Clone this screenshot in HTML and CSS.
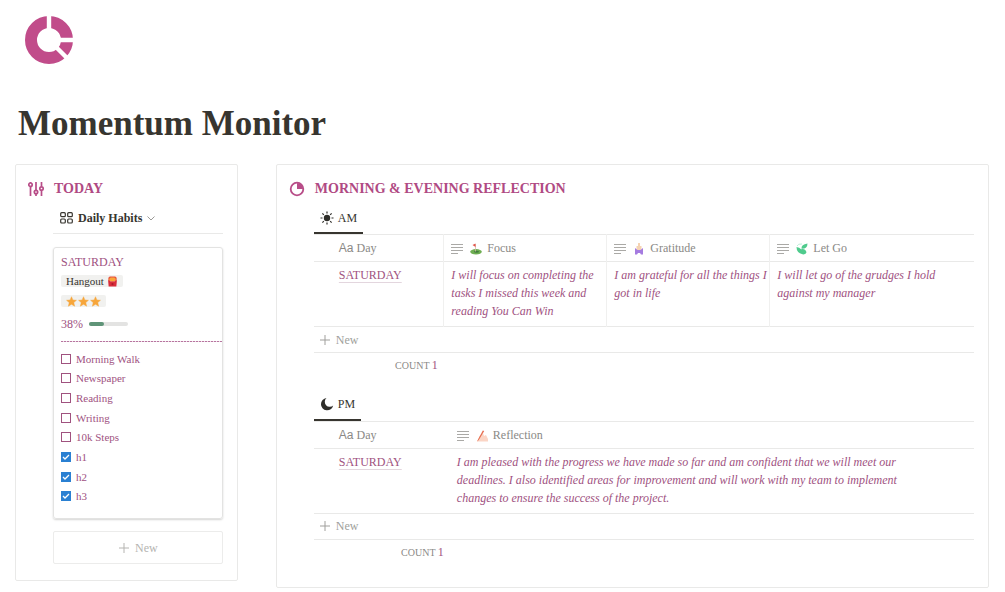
FILE: index.html
```html
<!DOCTYPE html>
<html lang="en">
<head>
    <meta charset="UTF-8">
    <meta name="viewport" content="width=device-width, initial-scale=1.0">
    <title>Momentum Monitor</title>
    <link rel="stylesheet" href="styles.css">
</head>
<body>

    <!-- Shared icons -->
    <svg width="0" height="0" class="sprite" aria-hidden="true">
        <symbol id="lines" viewBox="0 0 12 12">
            <path d="M0 1.5h12M0 4.5h12M0 7.5h12M0 10.5h7" stroke="#aaa9a6" stroke-width="1.2"/>
        </symbol>
        <symbol id="plus" viewBox="0 0 12 12">
            <path d="M6 1v10M1 6h10" stroke="currentColor"/>
        </symbol>
        <symbol id="star" viewBox="0 0 12 12">
            <path d="M6 .8l1.5 3.5 3.9.4-2.9 2.5.9 3.9L6 9.1l-3.4 2 .9-3.9L.6 4.7l3.9-.4z" fill="#f7a63b" stroke="#f7a63b" stroke-width=".5" stroke-linejoin="round"/>
        </symbol>
    </svg>

    <header class="page-header">
        <svg class="logo" viewBox="0 0 48 48">
            <circle cx="24" cy="24" r="18" fill="none" stroke="#c14c8a" stroke-width="12"/>
            <path d="M24 24V-1M24 24h25M24 24l18 18" stroke="#fff" stroke-width="4.4"/>
        </svg>
        <h1>Momentum Monitor</h1>
    </header>

    <main class="board">

        <!-- Today -->
        <section class="panel">
            <h2>
                <svg class="h-icon" viewBox="0 0 16 16" fill="none" stroke="#b84d88" stroke-width="1.7">
                    <path d="M2.5 1v1M2.5 5.5V15M8 1v8M8 13v2M13.5 1v4.500M13.5 9.500V15"/>
                    <circle cx="2.500" cy="3.700" r="1.700"/>
                    <circle cx="8" cy="11" r="1.700"/>
                    <circle cx="13.500" cy="7.500" r="1.700"/>
                </svg>
                TODAY
            </h2>
            <div class="panel-body">
                <div class="view-bar">
                    <button class="view-select">
                        <svg class="grid-icon" viewBox="0 0 13 12" fill="none" stroke="#37352f" stroke-width="1.2">
                            <rect x=".7" y=".7" width="4.600" height="4" rx="1"/>
                            <rect x="7.700" y=".7" width="4.600" height="4" rx="1"/>
                            <rect x=".7" y="7" width="4.600" height="4" rx="1"/>
                            <rect x="7.700" y="7" width="4.600" height="4" rx="1"/>
                        </svg>
                        Daily Habits
                        <svg class="chevron" viewBox="0 0 8 8" fill="none" stroke="#9b9a97"><path d="M.5 2.500l3.500 3.500 3.500-3.500"/></svg>
                    </button>
                </div>

                <article class="card">
                    <h3>SATURDAY</h3>
                    <span class="tag">Hangout
                        <svg class="emoji" viewBox="0 0 12 12">
                            <path d="M1.500 5.500V2l1.500-1.500h6L10.500 2v3.500z" fill="#e8503a"/>
                            <path d="M2.500 5V3L4 1.500h4L9.500 3v2L6 6.500z" fill="#f9a63a"/>
                            <path d="M1.200 4.500Q6 7.500 10.800 4.500l-.6 7H1.800z" fill="#d92c3a"/>
                            <circle cx="6" cy="8.800" r="1.200" fill="#a71d2a"/>
                        </svg>
                    </span>
                    <span class="tag stars">
                        <svg class="star"><use href="#star"/></svg>
                        <svg class="star"><use href="#star"/></svg>
                        <svg class="star"><use href="#star"/></svg>
                    </span>
                    <div class="progress">
                        38%
                        <div class="bar"><div class="bar-fill" style="width: 38%"></div></div>
                    </div>
                    <hr>
                    <div class="habits">
                        <label><input type="checkbox">Morning Walk</label>
                        <label><input type="checkbox">Newspaper</label>
                        <label><input type="checkbox">Reading</label>
                        <label><input type="checkbox">Writing</label>
                        <label><input type="checkbox">10k Steps</label>
                        <label><input type="checkbox" checked>h1</label>
                        <label><input type="checkbox" checked>h2</label>
                        <label><input type="checkbox" checked>h3</label>
                    </div>
                </article>

                <button class="new-card"><svg class="plus"><use href="#plus"/></svg>New</button>
            </div>
        </section>

        <!-- Reflection -->
        <section class="panel">
            <h2>
                <svg class="h-icon" viewBox="0 0 16 16">
                    <circle cx="8" cy="8" r="6.300" fill="none" stroke="#b84d88" stroke-width="1.800"/>
                    <path d="M8 8V2a6 6 0 0 1 6 6z" fill="#b84d88"/>
                </svg>
                MORNING &amp; EVENING REFLECTION
            </h2>
            <div class="panel-body">
                <button class="tab">
                    <svg class="tab-icon" viewBox="0 0 14 14">
                        <circle cx="7" cy="7" r="3.200" fill="#2f2e2a"/>
                        <path d="M7 .5v2M7 11.500v2M.5 7h2M11.500 7h2M2.400 2.400l1.400 1.400M10.200 10.200l1.400 1.400M2.400 11.600l1.400-1.400M10.200 3.800l1.400-1.400" stroke="#2f2e2a" stroke-width="1.200"/>
                    </svg>
                    AM
                </button>
                <table class="am">
                    <colgroup><col class="c-day"><col class="c-text"><col class="c-text"><col></colgroup>
                    <thead>
                        <tr>
                            <th class="day"><span class="aa">Aa</span> Day</th>
                            <th>
                                <svg class="lines"><use href="#lines"/></svg>
                                <svg class="emoji" viewBox="0 0 12 12">
                                    <ellipse cx="6" cy="8.800" rx="5.800" ry="2.700" fill="#6fae52"/>
                                    <ellipse cx="6.500" cy="8.800" rx="2.500" ry="1" fill="#3f7d3c"/>
                                    <path d="M5.500 8.500V1" stroke="#d9b8a8" stroke-width=".8"/>
                                    <path d="M5.500.5v3.500L2.500 2z" fill="#e2544b"/>
                                </svg>
                                Focus
                            </th>
                            <th>
                                <svg class="lines"><use href="#lines"/></svg>
                                <svg class="emoji" viewBox="0 0 12 12">
                                    <path d="M5 0h2v3h1.500v4h-5V3H5z" fill="#f5d3b3"/>
                                    <path d="M2 5l2.500 2h3L10 5v6.500H8L7 10H5l-1 1.500H2z" fill="#a57be0"/>
                                </svg>
                                Gratitude
                            </th>
                            <th>
                                <svg class="lines"><use href="#lines"/></svg>
                                <svg class="emoji" viewBox="0 0 12 12">
                                    <path d="M11.500.5Q11.500 6 5.500 5.800 5 1.500 11.500.5z" fill="#4fcb8d"/>
                                    <path d="M.5 4Q.5 10 6.500 11.300q3.500.5 4-2-1.500-4.300-5.500-3Q3.500 4.500 .5 4z" fill="#4fcb8d"/>
                                    <path d="M6 1Q2 .5 1 3" fill="none" stroke="#bfeed8"/>
                                </svg>
                                Let Go
                            </th>
                        </tr>
                    </thead>
                    <tbody>
                        <tr>
                            <td class="day"><a href="#">SATURDAY</a></td>
                            <td>I will focus on completing the tasks I missed this week and reading You Can Win</td>
                            <td>I am grateful for all the things I got in life</td>
                            <td class="let-go">I will let go of the grudges I hold against my manager</td>
                        </tr>
                    </tbody>
                    <tfoot>
                        <tr class="new-row">
                            <td colspan="4"><button><svg class="plus"><use href="#plus"/></svg>New</button></td>
                        </tr>
                        <tr class="count-row">
                            <td>COUNT <b>1</b></td>
                        </tr>
                    </tfoot>
                </table>

                <button class="tab">
                    <svg class="tab-icon" viewBox="0 0 14 14">
                        <path d="M6.500 1A6.200 6.200 0 1 0 13.200 8.600 4.300 4.300 0 1 1 6.500 1z" fill="#2f2e2a"/>
                    </svg>
                    PM
                </button>
                <table class="pm">
                    <colgroup><col class="c-day"><col></colgroup>
                    <thead>
                        <tr>
                            <th class="day"><span class="aa">Aa</span> Day</th>
                            <th>
                                <svg class="lines"><use href="#lines"/></svg>
                                <svg class="emoji" viewBox="0 0 12 12">
                                    <path d="M1 11.500L3.500 6 7 3l1 3 2-1 2 4v2.500z" fill="#fbd5c5"/>
                                    <path d="M1 11.500L6.800.5l1.400.6L2.800 10z" fill="#e56b4e"/>
                                </svg>
                                Reflection
                            </th>
                        </tr>
                    </thead>
                    <tbody>
                        <tr>
                            <td class="day"><a href="#">SATURDAY</a></td>
                            <td class="reflection">I am pleased with the progress we have made so far and am confident that we will meet our deadlines. I also identified areas for improvement and will work with my team to implement changes to ensure the success of the project.</td>
                        </tr>
                    </tbody>
                    <tfoot>
                        <tr class="new-row">
                            <td colspan="2"><button><svg class="plus"><use href="#plus"/></svg>New</button></td>
                        </tr>
                        <tr class="count-row">
                            <td>COUNT <b>1</b></td>
                        </tr>
                    </tfoot>
                </table>
            </div>
        </section>

    </main>

</body>
</html>
```
FILE: styles.css
```css
* {
    box-sizing: border-box;
}
body {
    margin: 0;
    padding: 16px 16px 0 15px;
    background: #fff;
    color: #37352f;
    font-family: "Liberation Serif", serif;
    font-size: 12px;
    line-height: 18px;
}
button {
    padding: 0;
    border: 0;
    background: none;
    color: inherit;
    font: inherit;
    cursor: pointer;
}
svg {
    flex: none;
}
.sprite {
    position: absolute;
}

/* Header */
.logo {
    display: block;
    width: 48px;
    height: 48px;
    margin-left: 10px;
}
h1 {
    margin: 39px 0 19px 3px;
    font-size: 35px;
    line-height: 42px;
}

/* Panels */
.board {
    display: grid;
    grid-template-columns: 5fr 16fr;
    gap: 38px;
    align-items: start;
}
.panel {
    padding: 14px 14px 16px 12px;
    border: 1px solid #e9e9e8;
    border-radius: 2px;
}
h2 {
    display: flex;
    align-items: center;
    gap: 10px;
    margin: 0;
    color: #b04a83;
    font-size: 14px;
    line-height: 20px;
}
.h-icon {
    width: 16px;
    height: 16px;
}
.panel-body {
    padding-left: 25px;
}

/* Today */
.view-bar {
    height: 35px;
    padding: 10px 7px 0;
    border-bottom: 1px solid #e9e9e8;
}
.view-select {
    display: flex;
    align-items: center;
    gap: 5px;
    font-weight: bold;
}
.grid-icon {
    width: 13px;
    height: 12px;
}
.chevron {
    width: 8px;
    height: 8px;
}
.card {
    display: flex;
    flex-direction: column;
    align-items: flex-start;
    margin-top: 13px;
    padding: 5px 0 12px 7px;
    border: 1px solid #e3e3e2;
    border-radius: 3px;
    box-shadow: 0 1px 2px #d5d5d4;
    color: #a0527f;
}
.card h3 {
    margin: 0 0 4px;
    font-size: 12px;
    font-weight: normal;
    line-height: 18px;
}
.tag {
    display: flex;
    align-items: center;
    gap: 3px;
    height: 12px;
    padding: 0 5px;
    border-radius: 2px;
    background: #f1f1ef;
    color: #37352f;
    font-size: 11px;
}
.stars {
    gap: 1px;
    margin-top: 8px;
}
.star {
    width: 11px;
    height: 11px;
}
.emoji {
    width: 12px;
    height: 12px;
    margin-right: 2px;
}
.tag .emoji {
    width: 11px;
    height: 11px;
    margin: 0;
}
.progress {
    display: flex;
    align-items: center;
    gap: 6px;
    margin-top: 8px;
}
.bar {
    width: 39px;
    height: 4px;
    border-radius: 2px;
    background: #e3e3e2;
}
.bar-fill {
    height: 4px;
    border-radius: 2px;
    background: #5f9478;
}
hr {
    width: 100%;
    height: 1px;
    margin: 8px 0 7px;
    border: 0;
    background: repeating-linear-gradient(to right, #b7759f 0 2px, #eedde8 2px 3px);
}
.habits {
    display: grid;
    grid-auto-rows: 1fr;
    height: 157px;
    font-size: 11px;
}
.habits label {
    display: flex;
    align-items: center;
    gap: 5px;
}
.habits input {
    appearance: none;
    width: 10px;
    height: 10px;
    margin: 0;
    border: 1px solid #a0527f;
}
.habits input:checked {
    border-color: #2a80d2;
    background: #2a80d2 url("data:image/svg+xml,%3Csvg xmlns='http://www.w3.org/2000/svg' viewBox='0 0 8 8' fill='none' stroke='white' stroke-width='1.3'%3E%3Cpath d='M1 4l2 2 4-4'/%3E%3C/svg%3E");
}
.new-card {
    display: flex;
    align-items: center;
    justify-content: center;
    gap: 5px;
    width: 100%;
    height: 33px;
    margin-top: 12px;
    border: 1px solid #ececeb;
    border-radius: 2px;
    color: #b5b4b1;
}
.plus {
    width: 12px;
    height: 12px;
}

/* Reflection */
.tab {
    display: flex;
    align-items: center;
    gap: 4px;
    height: 35px;
    padding: 4px 6px 0;
    border-bottom: 2px solid #37352f;
}
.tab-icon {
    width: 14px;
    height: 14px;
}
table {
    width: 100%;
    table-layout: fixed;
    border-collapse: collapse;
    border-top: 1px solid #e9e9e8;
}
.am {
    margin-bottom: 7px;
}
.pm {
    margin-bottom: 6px;
}
.am .c-day {
    width: 130px;
}
.pm .c-day {
    width: 136px;
}
.c-text {
    width: 163px;
}
th {
    height: 27px;
    padding: 0 7px;
    color: #8a8986;
    font-weight: normal;
    text-align: left;
}
th svg {
    vertical-align: middle;
}
.lines {
    width: 12px;
    height: 12px;
    margin-right: 4px;
}
.aa {
    font-family: "Liberation Sans", sans-serif;
    font-size: 12px;
}
tr {
    border-bottom: 1px solid #e9e9e8;
}
tbody td {
    padding: 4px 2px 6px 7px;
    color: #a0527f;
    font-style: italic;
    vertical-align: top;
}
.day {
    padding-left: 25px;
    font-style: normal;
}
.am th + th, .am tbody td + td {
    border-left: 1px solid #f0f0ef;
}
.let-go {
    padding-right: 24px;
}
.reflection {
    padding-right: 70px;
}
td a {
    color: inherit;
    text-decoration: underline #e3d6de;
    text-underline-offset: 3px;
}
.new-row td {
    height: 26px;
    padding: 0 5px;
}
.new-row button {
    display: flex;
    align-items: center;
    gap: 5px;
    color: #a09f9c;
}
.count-row {
    border: 0;
}
.count-row td {
    height: 26px;
    padding: 0 6px;
    color: #8a8986;
    font-size: 10px;
    text-align: right;
}
.count-row b {
    color: #a0527f;
    font-size: 12px;
    font-weight: normal;
}
```
